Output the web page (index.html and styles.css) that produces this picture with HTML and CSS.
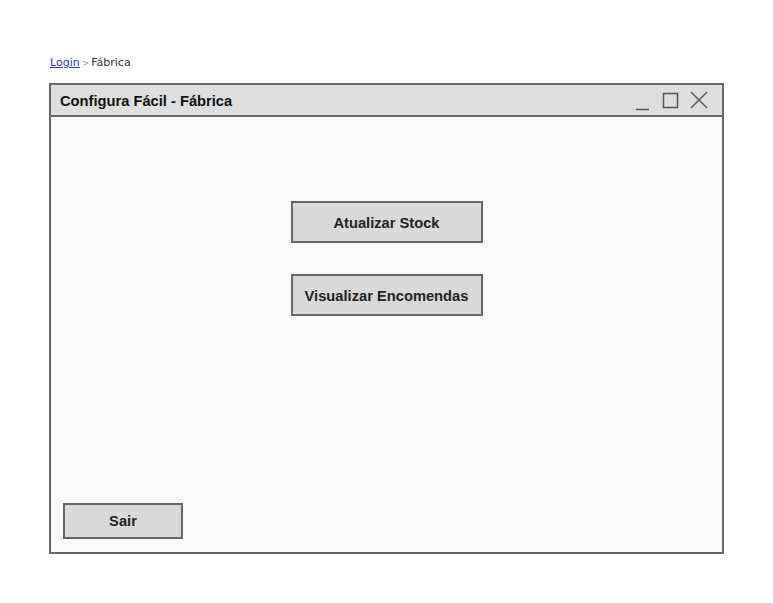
FILE: index.html
```html
<!DOCTYPE html>
<html>
<head>
<meta charset="utf-8">
<link rel="stylesheet" href="styles.css">
</head>
<body>
<nav class="crumbs"><span class="crumb-link">Login</span><span class="crumb-sep">&gt;</span><span class="crumb-cur">Fábrica</span></nav>
<div class="window">
  <div class="titlebar">
    <span class="title">Configura Fácil - Fábrica</span>
    <svg class="controls" width="76" height="20" viewBox="0 0 76 20">
      <line x1="1" y1="18.5" x2="14" y2="18.5" stroke="#555" stroke-width="1.5"/>
      <rect x="28.5" y="2.5" width="14" height="14" fill="none" stroke="#555" stroke-width="1.5"/>
      <line x1="56" y1="1" x2="72" y2="17" stroke="#555" stroke-width="1.5"/>
      <line x1="72" y1="1" x2="56" y2="17" stroke="#555" stroke-width="1.5"/>
    </svg>
  </div>
  <div class="content">
    <div class="actions">
      <button class="btn btn-wide">Atualizar Stock</button>
      <button class="btn btn-wide">Visualizar Encomendas</button>
    </div>
    <button class="btn btn-exit">Sair</button>
  </div>
</div>
</body>
</html>
```
FILE: styles.css
```css
html, body {
  margin: 0;
  padding: 0;
  background: #ffffff;
}
body {
  padding: 53px 49px 0 49px;
  font-family: "Liberation Sans", Arial, sans-serif;
}
.crumbs {
  font-family: "DejaVu Sans", sans-serif;
  font-size: 11px;
  height: 18px;
  line-height: 19px;
  padding-left: 1px;
  color: #333;
  margin-bottom: 12px;
}
.crumb-link {
  color: #3333ee;
  text-decoration: underline;
}
.crumb-sep {
  color: #999;
  font-size: 9px;
  margin: 0 2px;
}
.window {
  width: 671px;
  height: 467px;
  border: 2px solid #666666;
  display: flex;
  flex-direction: column;
  background: #f9f9f9;
}
.titlebar {
  height: 30px;
  background: #dedede;
  border-bottom: 2px solid #666666;
  display: flex;
  align-items: center;
  justify-content: space-between;
  padding: 0 11px 0 9px;
  flex: none;
}
.title {
  font-weight: bold;
  font-size: 14.7px;
  color: #111;
  margin-top: 1px;
}
.controls {
  display: block;
  margin-top: 1px;
}
.content {
  flex: 1;
  display: flex;
  flex-direction: column;
  justify-content: space-between;
  align-items: stretch;
  padding: 84px 12px 13px 12px;
}
.actions {
  display: flex;
  flex-direction: column;
  align-items: center;
  gap: 31px;
}
.btn {
  font-family: "Liberation Sans", Arial, sans-serif;
  font-weight: bold;
  font-size: 14.7px;
  color: #222;
  background: #d9d9d9;
  border: 2px solid #666666;
  border-radius: 0;
  padding: 0;
  margin: 0;
}
.btn-wide {
  width: 192px;
  height: 42px;
  padding-top: 1px;
}
.btn-exit {
  width: 120px;
  height: 36px;
  align-self: flex-start;
}
```
